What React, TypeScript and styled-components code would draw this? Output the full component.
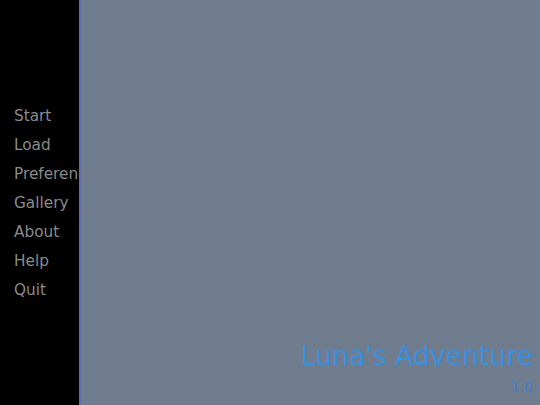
import styled, { createGlobalStyle } from 'styled-components';

const GlobalStyle = createGlobalStyle`
  html, body {
    margin: 0;
    padding: 0;
    background: #000;
  }
  #root {
    height: 100vh;
  }
`;

const menuItems = ['Start', 'Load', 'Preferences', 'Gallery', 'About', 'Help', 'Quit'];

export default function App() {
  return (
    <>
      <GlobalStyle />
      <ScreenStyle>
        {/* side menu */}
        <SidebarStyle>
          <MenuStyle>
            {menuItems.map((item) => (
              <MenuItemStyle key={item}>{item}</MenuItemStyle>
            ))}
          </MenuStyle>
        </SidebarStyle>

        {/* main area */}
        <MainStyle>
          <TitleStyle>Luna's Adventure</TitleStyle>
          <VersionStyle>1.0</VersionStyle>
        </MainStyle>
      </ScreenStyle>
    </>
  );
}

const ScreenStyle = styled.div`
  display: flex;
  width: 100%;
  height: 100%;
  font-family: 'DejaVu Sans', Verdana, sans-serif;
`;

const SidebarStyle = styled.div`
  width: 81px;
  flex-shrink: 0;
  background: #000;
  border-right: 2px solid #5a6db3;
  overflow: hidden;
  box-sizing: border-box;
`;

const MenuStyle = styled.ul`
  list-style: none;
  margin: 0;
  padding: 102px 0 0 14px;
`;

const MenuItemStyle = styled.li`
  font-size: 15.3px;
  line-height: 29px;
  color: #8a8a8a;
  white-space: nowrap;
  cursor: pointer;

  &:hover {
    color: #ccc;
  }
`;

const MainStyle = styled.div`
  flex: 1;
  background: #6f7d8f;
  display: flex;
  flex-direction: column;
  justify-content: flex-end;
  align-items: flex-end;
  padding: 0 7px 10px 0;
`;

const TitleStyle = styled.div`
  font-size: 26.7px;
  color: #3a8fdf;
  margin-bottom: 8px;
`;

const VersionStyle = styled.div`
  font-size: 14px;
  color: #3d80cf;
`;
